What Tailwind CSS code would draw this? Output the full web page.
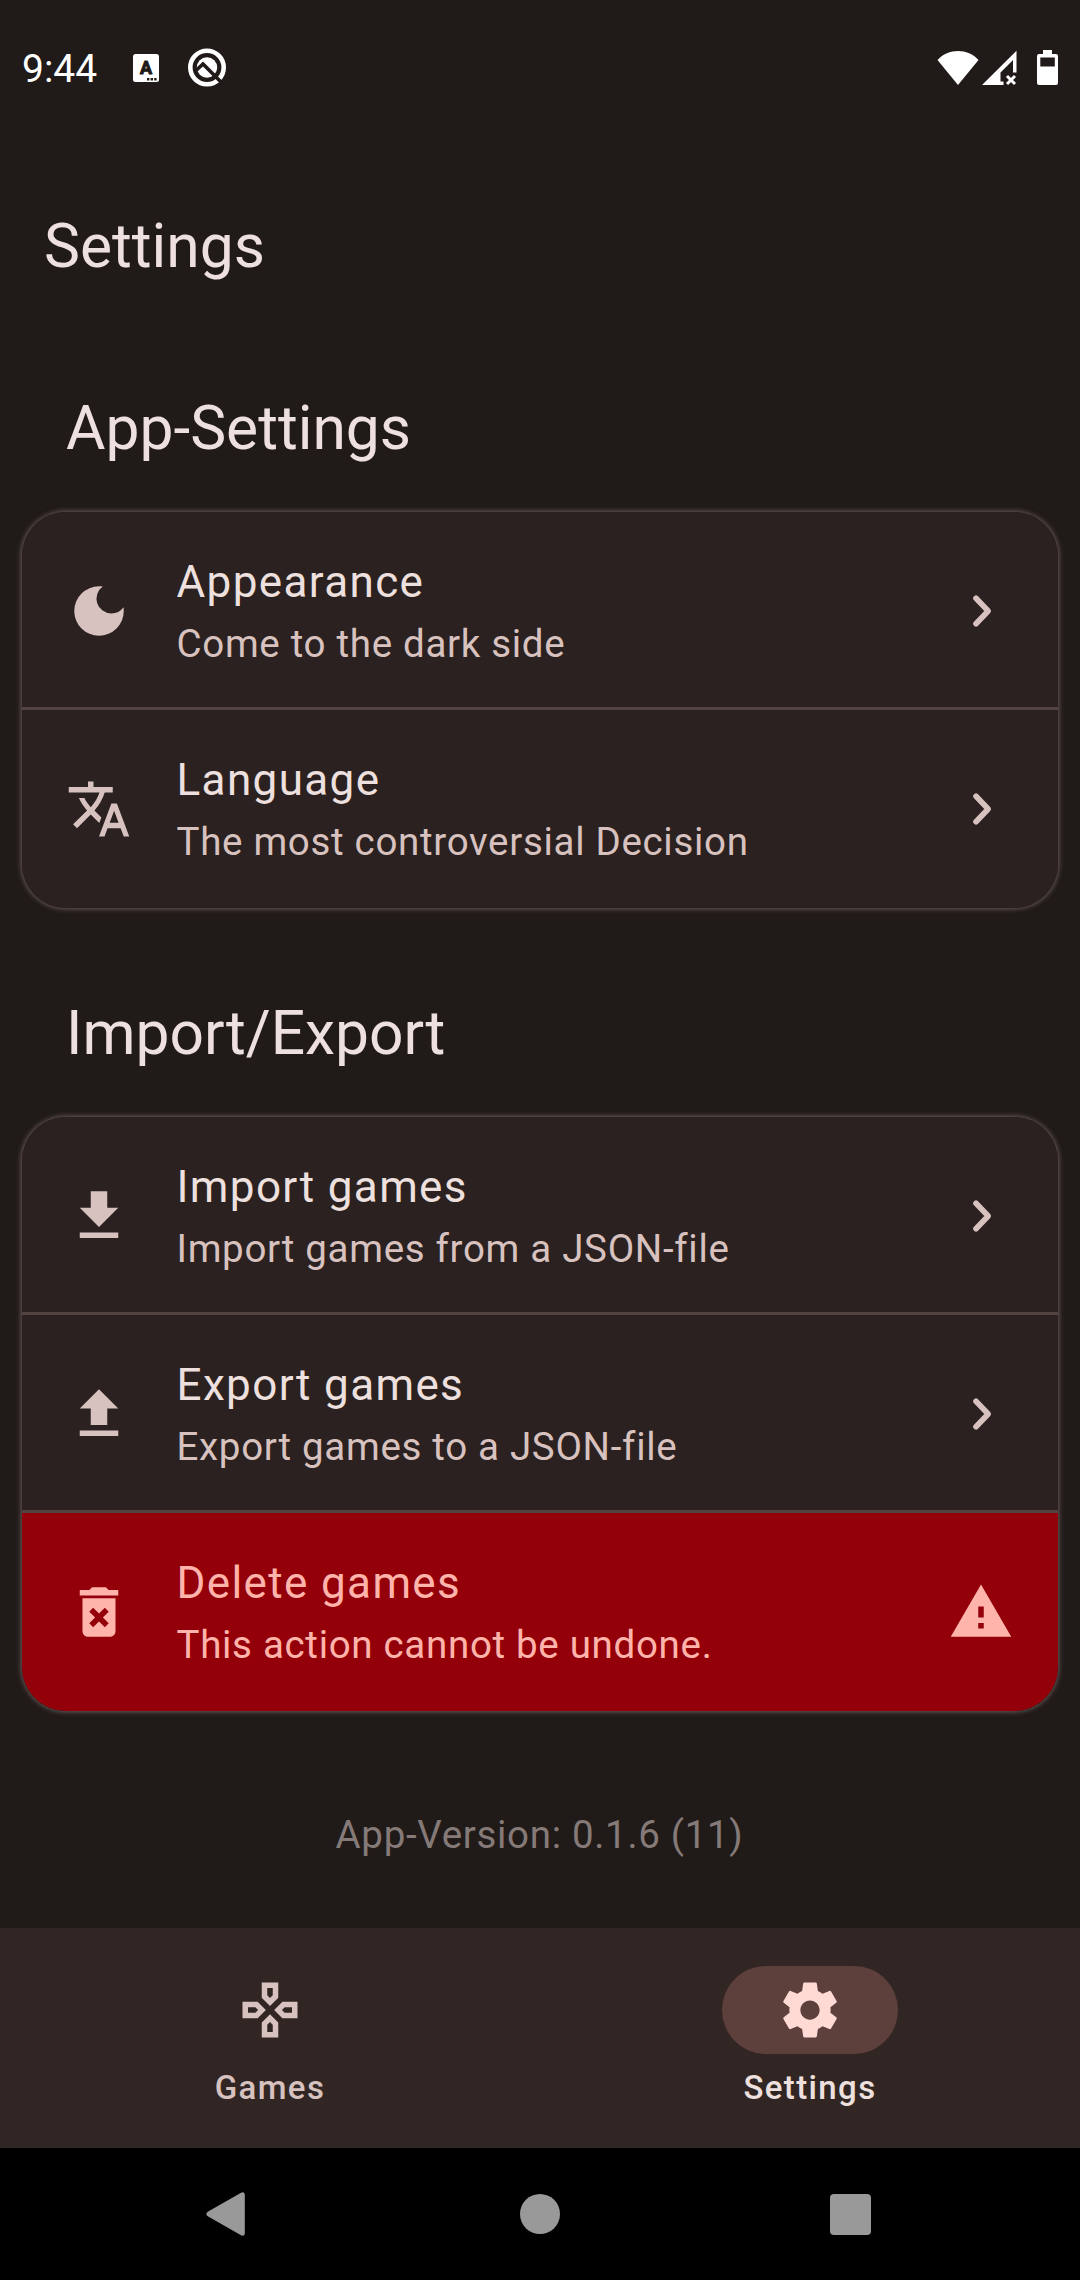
<!DOCTYPE html>
<html lang="en">
<head>
<meta charset="utf-8">
<title>Settings</title>
<script src="https://cdn.jsdelivr.net/npm/@tailwindcss/browser@4"></script>
</head>
<body class="bg-[#201a18]">
<div class="flex h-[2280px] w-[1080px] flex-col overflow-hidden bg-[#201a18] font-['Roboto',sans-serif] text-[#ede0de]">

  <!-- Status bar -->
  <div class="flex h-[136px] shrink-0 items-center pl-[22px] pr-[22px] text-white">
    <span class="w-[111px] pt-[2px] text-[39px] leading-[55px]">9:44</span>
    <svg class="h-[28px] w-[26px]" viewBox="0 0 26 28">
      <rect width="26" height="28" rx="2.5" fill="#fff"/>
      <text x="13" y="20" text-anchor="middle" font-family="Roboto" font-weight="700" font-size="18" fill="#201a18" stroke="#201a18" stroke-width="1" stroke-linejoin="round">A</text>
      <path d="M14 24h2.400v2.400h-2.400zM17.600 24h2.400v2.400h-2.400zM21.200 24h2.400v2.400h-2.400z" fill="#201a18"/>
    </svg>
    <svg class="ml-[28px] h-[40px] w-[40px]" viewBox="0 0 40 40" fill="none">
      <circle cx="20" cy="19.500" r="16.700" stroke="#fff" stroke-width="4.600"/>
      <circle cx="20" cy="19.500" r="10.200" fill="#fff"/>
      <path d="M9 22.500l7-6.500L36 36" stroke="#201a18" stroke-width="3.600"/>
    </svg>
    <svg class="ml-auto h-[36px] w-[42px]" viewBox="0 0 42 36"><path d="M.500 10C11-2 31-2 41.500 10L21 35z" fill="#fff"/></svg>
    <svg class="ml-[3px] h-[36px] w-[35px]" viewBox="0 0 35 36">
      <path fill-rule="evenodd" d="M0 35L34.500 .800V22.500H31V10L18.500 22.500V31.500H21.500V35z" fill="#fff"/>
      <path d="M25 26l8 8m0-8l-8 8" stroke="#fff" stroke-width="3"/>
    </svg>
    <svg class="ml-[20px] h-[36px] w-[21px]" viewBox="0 0 21 36"><path fill-rule="evenodd" d="M6 0h9v4h4a2 2 0 0 1 2 2v27a2 2 0 0 1-2 2H2a2 2 0 0 1-2-2V6a2 2 0 0 1 2-2h4zM3.300 7.500v9h14.500v-9z" fill="#fff"/></svg>
  </div>

  <!-- App bar -->
  <header class="flex h-[220px] shrink-0 items-center px-[44px]">
    <h1 class="text-[60.5px] leading-[77px]">Settings</h1>
  </header>

  <main class="flex flex-col px-[22px]">
    <h2 class="mt-[34px] mb-[45px] px-[44px] text-[60.5px] leading-[77px]">App-Settings</h2>
    <section class="rounded-[44px] shadow-[0_0_5px_1px_#6b5c5b]">
      <div class="overflow-hidden rounded-[44px] bg-[#2b2120]">
        <div class="flex h-[198px] items-center gap-[44px] border-b-[3px] border-[#534341] px-[44px] pt-[3px]">
          <svg class="size-[66px] fill-[#d8c2bf]" viewBox="0 0 24 24"><path d="M12 3a9 9 0 1 0 9 9c0-.46-.04-.92-.1-1.36a5.389 5.389 0 0 1-4.400 2.260 5.403 5.403 0 0 1-3.140-9.800c-.44-.06-.9-.1-1.360-.1z"/></svg>
          <div class="flex flex-1 flex-col gap-px pb-[3px] pl-[0.5px]">
            <div class="text-[44px] leading-[66px] tracking-[1.375px]">Appearance</div>
            <div class="text-[38.5px] leading-[55px] tracking-[0.6875px] text-[#d8c2bf]">Come to the dark side</div>
          </div>
          <svg class="size-[66px] fill-none stroke-[#d8c2bf]" viewBox="0 0 66 66"><path d="M28 20.200L40.200 33L28 45.800" stroke-width="5.600" stroke-linecap="round" stroke-linejoin="round"/></svg>
        </div>
        <div class="flex h-[198px] items-center gap-[44px] px-[44px]">
          <svg class="size-[66px] fill-[#d8c2bf]" viewBox="0 0 24 24"><path d="M12.870 15.070l-2.540-2.510.03-.03A17.520 17.520 0 0014.070 6H17V4h-7V2H8v2H1v2h11.170C11.500 7.920 10.440 9.750 9 11.350 8.070 10.320 7.300 9.190 6.690 8h-2c.73 1.630 1.730 3.170 2.980 4.560l-5.090 5.020L4 19l5-5 3.110 3.110.76-2.040zM18.500 10h-2L12 22h2l1.120-3h4.750L21 22h2l-4.500-12zm-2.620 7l1.620-4.330L19.120 17h-3.240z"/></svg>
          <div class="flex flex-1 flex-col gap-px pb-[3px] pl-[0.5px]">
            <div class="text-[44px] leading-[66px] tracking-[1.375px]">Language</div>
            <div class="text-[38.5px] leading-[55px] tracking-[0.6875px] text-[#d8c2bf]">The most controversial Decision</div>
          </div>
          <svg class="size-[66px] fill-none stroke-[#d8c2bf]" viewBox="0 0 66 66"><path d="M28 20.200L40.200 33L28 45.800" stroke-width="5.600" stroke-linecap="round" stroke-linejoin="round"/></svg>
        </div>
      </div>
    </section>

    <h2 class="mt-[87px] mb-[45px] px-[44px] text-[60.5px] leading-[77px]">Import/Export</h2>
    <section class="rounded-[44px] shadow-[0_0_5px_1px_#6b5c5b]">
      <div class="overflow-hidden rounded-[44px] bg-[#2b2120]">
        <div class="flex h-[198px] items-center gap-[44px] border-b-[3px] border-[#534341] px-[44px] pt-[3px]">
          <svg class="size-[66px] fill-[#d8c2bf]" viewBox="0 0 24 24"><path d="M19 9h-4V3H9v6H5l7 7 7-7zM5 18v2h14v-2H5z"/></svg>
          <div class="flex flex-1 flex-col gap-px pb-[3px] pl-[0.5px]">
            <div class="text-[44px] leading-[66px] tracking-[1.375px]">Import games</div>
            <div class="text-[38.5px] leading-[55px] tracking-[0.6875px] text-[#d8c2bf]">Import games from a JSON-file</div>
          </div>
          <svg class="size-[66px] fill-none stroke-[#d8c2bf]" viewBox="0 0 66 66"><path d="M28 20.200L40.200 33L28 45.800" stroke-width="5.600" stroke-linecap="round" stroke-linejoin="round"/></svg>
        </div>
        <div class="flex h-[198px] items-center gap-[44px] border-b-[3px] border-[#534341] px-[44px] pt-[3px]">
          <svg class="size-[66px] fill-[#d8c2bf]" viewBox="0 0 24 24"><path d="M9 16h6v-6h4l-7-7-7 7h4zm-4 2h14v2H5z"/></svg>
          <div class="flex flex-1 flex-col gap-px pb-[3px] pl-[0.5px]">
            <div class="text-[44px] leading-[66px] tracking-[1.375px]">Export games</div>
            <div class="text-[38.5px] leading-[55px] tracking-[0.6875px] text-[#d8c2bf]">Export games to a JSON-file</div>
          </div>
          <svg class="size-[66px] fill-none stroke-[#d8c2bf]" viewBox="0 0 66 66"><path d="M28 20.200L40.200 33L28 45.800" stroke-width="5.600" stroke-linecap="round" stroke-linejoin="round"/></svg>
        </div>
        <div class="flex h-[198px] items-center gap-[44px] bg-[#93000a] px-[44px] text-[#ffb4ab]">
          <svg class="size-[66px] fill-[#ffb4ab]" viewBox="0 0 24 24"><path fill-rule="evenodd" d="M6 19c0 1.100.9 2 2 2h8c1.100 0 2-.9 2-2V7H6v12zm2.460-7.120l1.410-1.410L12 12.590l2.120-2.120 1.410 1.410L13.410 14l2.120 2.120-1.410 1.410L12 15.410l-2.120 2.120-1.410-1.410L10.590 14l-2.130-2.120zM15.500 4l-1-1h-5l-1 1H5v2h14V4z"/></svg>
          <div class="flex flex-1 flex-col gap-px pb-[3px] pl-[0.5px]">
            <div class="text-[44px] leading-[66px] tracking-[1.375px]">Delete games</div>
            <div class="text-[38.5px] leading-[55px] tracking-[0.6875px]">This action cannot be undone.</div>
          </div>
          <svg class="size-[66px] fill-[#ffb4ab]" viewBox="0 0 24 24"><path fill-rule="evenodd" d="M1 21h22L12 2 1 21zm12-3h-2v-2h2v2zm0-4h-2v-4h2v4z"/></svg>
        </div>
      </div>
    </section>

    <p class="mt-[96px] pr-px text-center text-[38.5px] leading-[55px] tracking-[0.6875px] text-[#857a78]">App-Version: 0.1.6 (11)</p>
  </main>

  <!-- Bottom navigation -->
  <nav class="mt-auto grid h-[220px] shrink-0 grid-cols-2 bg-[#322625] pt-[38px] text-[33px] leading-[44px] font-medium tracking-[1.375px]">
    <div class="flex flex-col items-center gap-[12px] text-[#d8c2bf]">
      <div class="flex h-[88px] w-[176px] items-center justify-center rounded-full">
        <svg class="size-[66px] fill-[#d8c2bf]" viewBox="0 0 24 24"><path d="M13 4v2.670l-1 1-1-1V4h2m7 7v2h-2.670l-1-1 1-1H20M6.670 11l1 1-1 1H4v-2h2.670M12 16.330l1 1V20h-2v-2.670l1-1M15 2H9v5.500l3 3 3-3V2zm7 7h-5.500l-3 3 3 3H22V9zM7.500 9H2v6h5.500l3-3-3-3zm4.500 4.500l-3 3V22h6v-5.500l-3-3z"/></svg>
      </div>
      <span>Games</span>
    </div>
    <div class="flex flex-col items-center gap-[12px]">
      <div class="flex h-[88px] w-[176px] items-center justify-center rounded-full bg-[#5d3f3b]">
        <svg class="size-[66px] fill-[#ffdad5]" viewBox="0 0 24 24"><path d="M19.430 12.980c.04-.32.07-.64.07-.98s-.03-.66-.07-.98l2.110-1.650c.19-.15.24-.42.12-.64l-2-3.460c-.12-.22-.39-.3-.61-.22l-2.490 1c-.52-.4-1.080-.73-1.690-.98l-.38-2.650C14.460 2.180 14.250 2 14 2h-4c-.25 0-.46.18-.49.42l-.38 2.650c-.61.25-1.170.59-1.690.98l-2.490-1c-.23-.09-.49 0-.61.22l-2 3.460c-.13.22-.07.49.12.64l2.110 1.650c-.04.32-.07.65-.07.98s.03.66.07.98l-2.110 1.650c-.19.15-.24.42-.12.64l2 3.460c.12.22.39.3.61.22l2.490-1c.52.4 1.080.73 1.690.98l.38 2.650c.03.24.24.42.49.42h4c.25 0 .46-.18.49-.42l.38-2.650c.61-.25 1.170-.59 1.690-.98l2.490 1c.23.09.49 0 .61-.22l2-3.460c.12-.22.07-.49-.12-.64l-2.110-1.650zM12 15.500c-1.930 0-3.500-1.570-3.500-3.500s1.570-3.500 3.500-3.500 3.500 1.570 3.500 3.500-1.570 3.500-3.500 3.500z"/></svg>
      </div>
      <span>Settings</span>
    </div>
  </nav>

  <!-- System buttons -->
  <div class="flex h-[132px] shrink-0 items-center bg-black pl-[206px]">
    <svg class="h-[46px] w-[40px] fill-[#999] stroke-[#999]" viewBox="0 0 40 46"><path d="M3 23L36.300 3.800V42.200z" stroke-width="5" stroke-linejoin="round"/></svg>
    <div class="ml-[274px] size-[40px] rounded-full bg-[#999]"></div>
    <div class="ml-[270px] size-[41px] rounded-[4px] bg-[#999]"></div>
  </div>
</div>
</body>
</html>
